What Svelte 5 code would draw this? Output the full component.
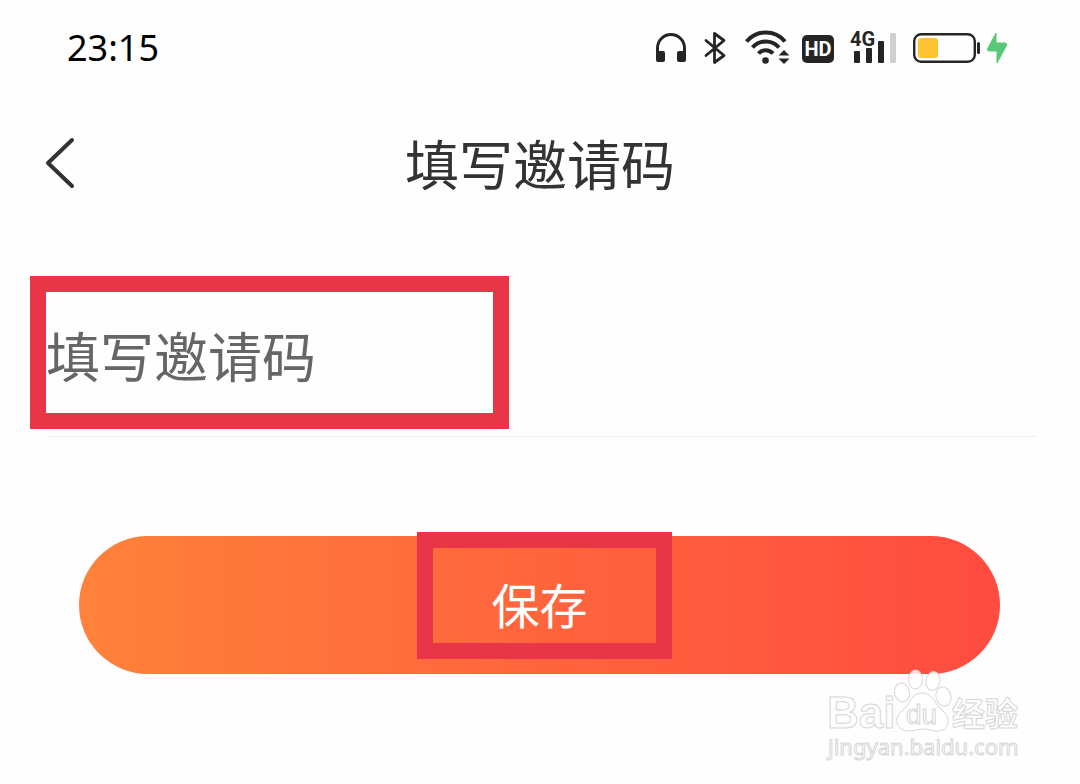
<script>
  let time = "23:15";
  let title = "填写邀请码";
  let code = "";
</script>

<style>
  :global(body) {
    margin: 0;
    background: #fefefe;
  }

  .page {
    position: relative;
    padding-bottom: 110px;
    font-family: "Noto Sans", "Noto Sans CJK SC", sans-serif;
    color: #333;
  }

  .status-bar {
    display: flex;
    align-items: center;
    justify-content: space-between;
    height: 96px;
    padding: 0 72px 0 67px;
  }

  .time {
    font-size: 36px;
    line-height: 48px;
    color: #000;
  }

  .status-icons {
    display: flex;
    gap: 12px;
  }

  svg {
    display: block;
    overflow: visible;
  }

  .narrow {
    font-family: "Liberation Sans Narrow", Roboto, sans-serif;
    font-weight: 700;
  }

  .nav {
    display: grid;
    grid-template-columns: 60px 1fr 60px;
    align-items: center;
    height: 134px;
    padding: 0 40px;
  }

  .back {
    width: 40px;
    padding: 0;
    border: 0;
    background: none;
  }

  h1 {
    margin: 0;
    font-family: "Noto Sans CJK SC", sans-serif;
    font-size: 54px;
    font-weight: 400;
    line-height: 80px;
    text-align: center;
  }

  .field {
    position: relative;
    margin: 46px 43px 0 46px;
    padding: 16px 0 23px;
    border-bottom: 1px solid #f0f0f0;
  }

  input {
    display: block;
    box-sizing: border-box;
    width: 100%;
    height: 121px;
    padding: 4px 0 0;
    border: 0;
    outline: 0;
    background: none;
    font-family: "Noto Sans CJK SC", sans-serif;
    font-size: 54px;
    color: #333;
  }

  input::placeholder {
    color: #666;
    opacity: 1;
  }

  .mark {
    position: absolute;
    box-sizing: border-box;
    border: 16px solid #e83548;
    pointer-events: none;
  }

  .mark-field {
    top: 0;
    left: -16px;
    width: 479px;
    height: 153px;
  }

  .mark-save {
    top: -4px;
    left: 50%;
    width: 255px;
    height: 127px;
    margin-left: -123px;
  }

  .save {
    position: relative;
    display: block;
    width: calc(100% - 159px);
    height: 138px;
    margin: 99px 80px 0 79px;
    padding: 0 0 4px;
    border: 0;
    border-radius: 69px;
    background: linear-gradient(90deg, #ff823a, #ff6a3c 40%, #ff4b40);
    font-family: "Noto Sans CJK SC", sans-serif;
    font-size: 48px;
    color: #fff;
  }

  .watermark {
    position: absolute;
    right: 50px;
    bottom: 14px;
    font-family: "Liberation Sans", "Noto Sans CJK SC", sans-serif;
  }

  .watermark .site {
    font-family: "Noto Sans", sans-serif;
  }
</style>

<div class="page">
  <div class="status-bar">
    <span class="time">{time}</span>
    <div class="status-icons">
      <svg width="34" height="36" viewBox="0 0 34 36">
        <path d="M1.5 26V18a13.5 13.5 0 0 1 27 0v8" fill="none" stroke="#252525" stroke-width="3" />
        <rect y="21" width="9" height="11" rx="2" fill="#252525" />
        <rect x="21" y="21" width="9" height="11" rx="2" fill="#252525" />
      </svg>
      <svg width="30" height="36" viewBox="0 0 30 36">
        <path d="M4 10.5L22 25.5L12.5 32.5V3.5L22 10.5L4 25.5" fill="none" stroke="#252525" stroke-width="2.8" stroke-linejoin="round" stroke-linecap="round" />
      </svg>
      <svg width="46" height="36" viewBox="0 0 46 36">
        <g fill="none" stroke="#252525" stroke-width="4">
          <path d="M2.5 11.5C13 -.5 31 -.5 41 11.5" />
          <path d="M8.5 17.5C15.5 9.5 28 9.5 35 17.5" />
          <path d="M14.5 23.5C18.5 19 25 19 29 23.5" />
        </g>
        <circle cx="21.5" cy="30.5" r="3.3" fill="#252525" />
        <path d="M34.5 25.5L40 20L45.5 25.5zM34.5 28.5H45.5L40 34z" fill="#252525" />
      </svg>
      <svg class="narrow" width="34" height="36" viewBox="0 0 34 36">
        <rect y="5" width="32" height="28" rx="5" fill="#252525" />
        <text x="16" y="26" font-size="20" text-anchor="middle" fill="#fff">HD</text>
      </svg>
      <svg class="narrow" width="50" height="36" viewBox="0 0 50 36">
        <g fill="#252525">
          <rect x="6" y="21" width="6" height="12" rx="1" />
          <rect x="18" y="18" width="6" height="15" rx="1" />
          <rect x="30" y="11" width="6" height="22" rx="1" />
        </g>
        <rect x="42" y="3" width="6" height="30" rx="1" fill="#d0d0d0" />
        <text x="2" y="16" font-size="20" fill="#252525" stroke="#fefefe" stroke-width="2" paint-order="stroke">4G</text>
      </svg>
      <svg width="98" height="36" viewBox="0 0 98 36">
        <rect x="4.2" y="4.2" width="60.6" height="27.6" rx="7" fill="none" stroke="#252525" stroke-width="2.4" />
        <rect x="8" y="8" width="20" height="20" rx="3" fill="#ffc233" />
        <rect x="67" y="12" width="3" height="12" rx="1.5" fill="#252525" />
        <path d="M86 3L77.5 19Q77 21 79 21H87V33L96.5 15.5Q97 13 95 13H86z" fill="#58c776" stroke="#58c776" stroke-linejoin="round" />
      </svg>
    </div>
  </div>

  <header class="nav">
    <button class="back" type="button" aria-label="返回">
      <svg width="40" height="60" viewBox="0 0 40 60">
        <path d="M32 7L8 30L32 53" fill="none" stroke="#333" stroke-width="4" stroke-linecap="round" stroke-linejoin="round" />
      </svg>
    </button>
    <h1>{title}</h1>
  </header>

  <form onsubmit={(e) => e.preventDefault()}>
    <div class="field">
      <input type="text" placeholder={title} aria-label={title} bind:value={code} />
      <span class="mark mark-field"></span>
    </div>
    <button class="save" type="submit">
      保存
      <span class="mark mark-save"></span>
    </button>
  </form>

  <svg class="watermark" width="210" height="104" viewBox="0 0 210 104">
    <g fill="#fff" fill-opacity=".85" stroke="#d6d6d6" stroke-width="1">
      <text x="7" y="62" font-size="44" font-weight="700">Bai</text>
      <ellipse cx="82" cy="26.5" rx="7.5" ry="9.5" transform="rotate(-12 82 26.5)" />
      <ellipse cx="95.5" cy="13.5" rx="7" ry="9.5" />
      <ellipse cx="113" cy="15" rx="7" ry="9.5" transform="rotate(10 113 15)" />
      <ellipse cx="123.5" cy="30.5" rx="7.5" ry="9.5" transform="rotate(-15 123.5 30.5)" />
      <path d="M102 27C91 27 90 39 82 45C73 52 76 65 89 65C95 65 98 63 103 63C109 63 111 65 117 65C130 65 131 52 123 45C115 39 113 27 102 27z" />
      <text x="86" y="58" font-size="28">du</text>
      <text x="132" y="60" font-size="33" font-weight="700">经验</text>
      <text class="site" x="8" y="89" font-size="22">jingyan.baidu.com</text>
    </g>
  </svg>
</div>
